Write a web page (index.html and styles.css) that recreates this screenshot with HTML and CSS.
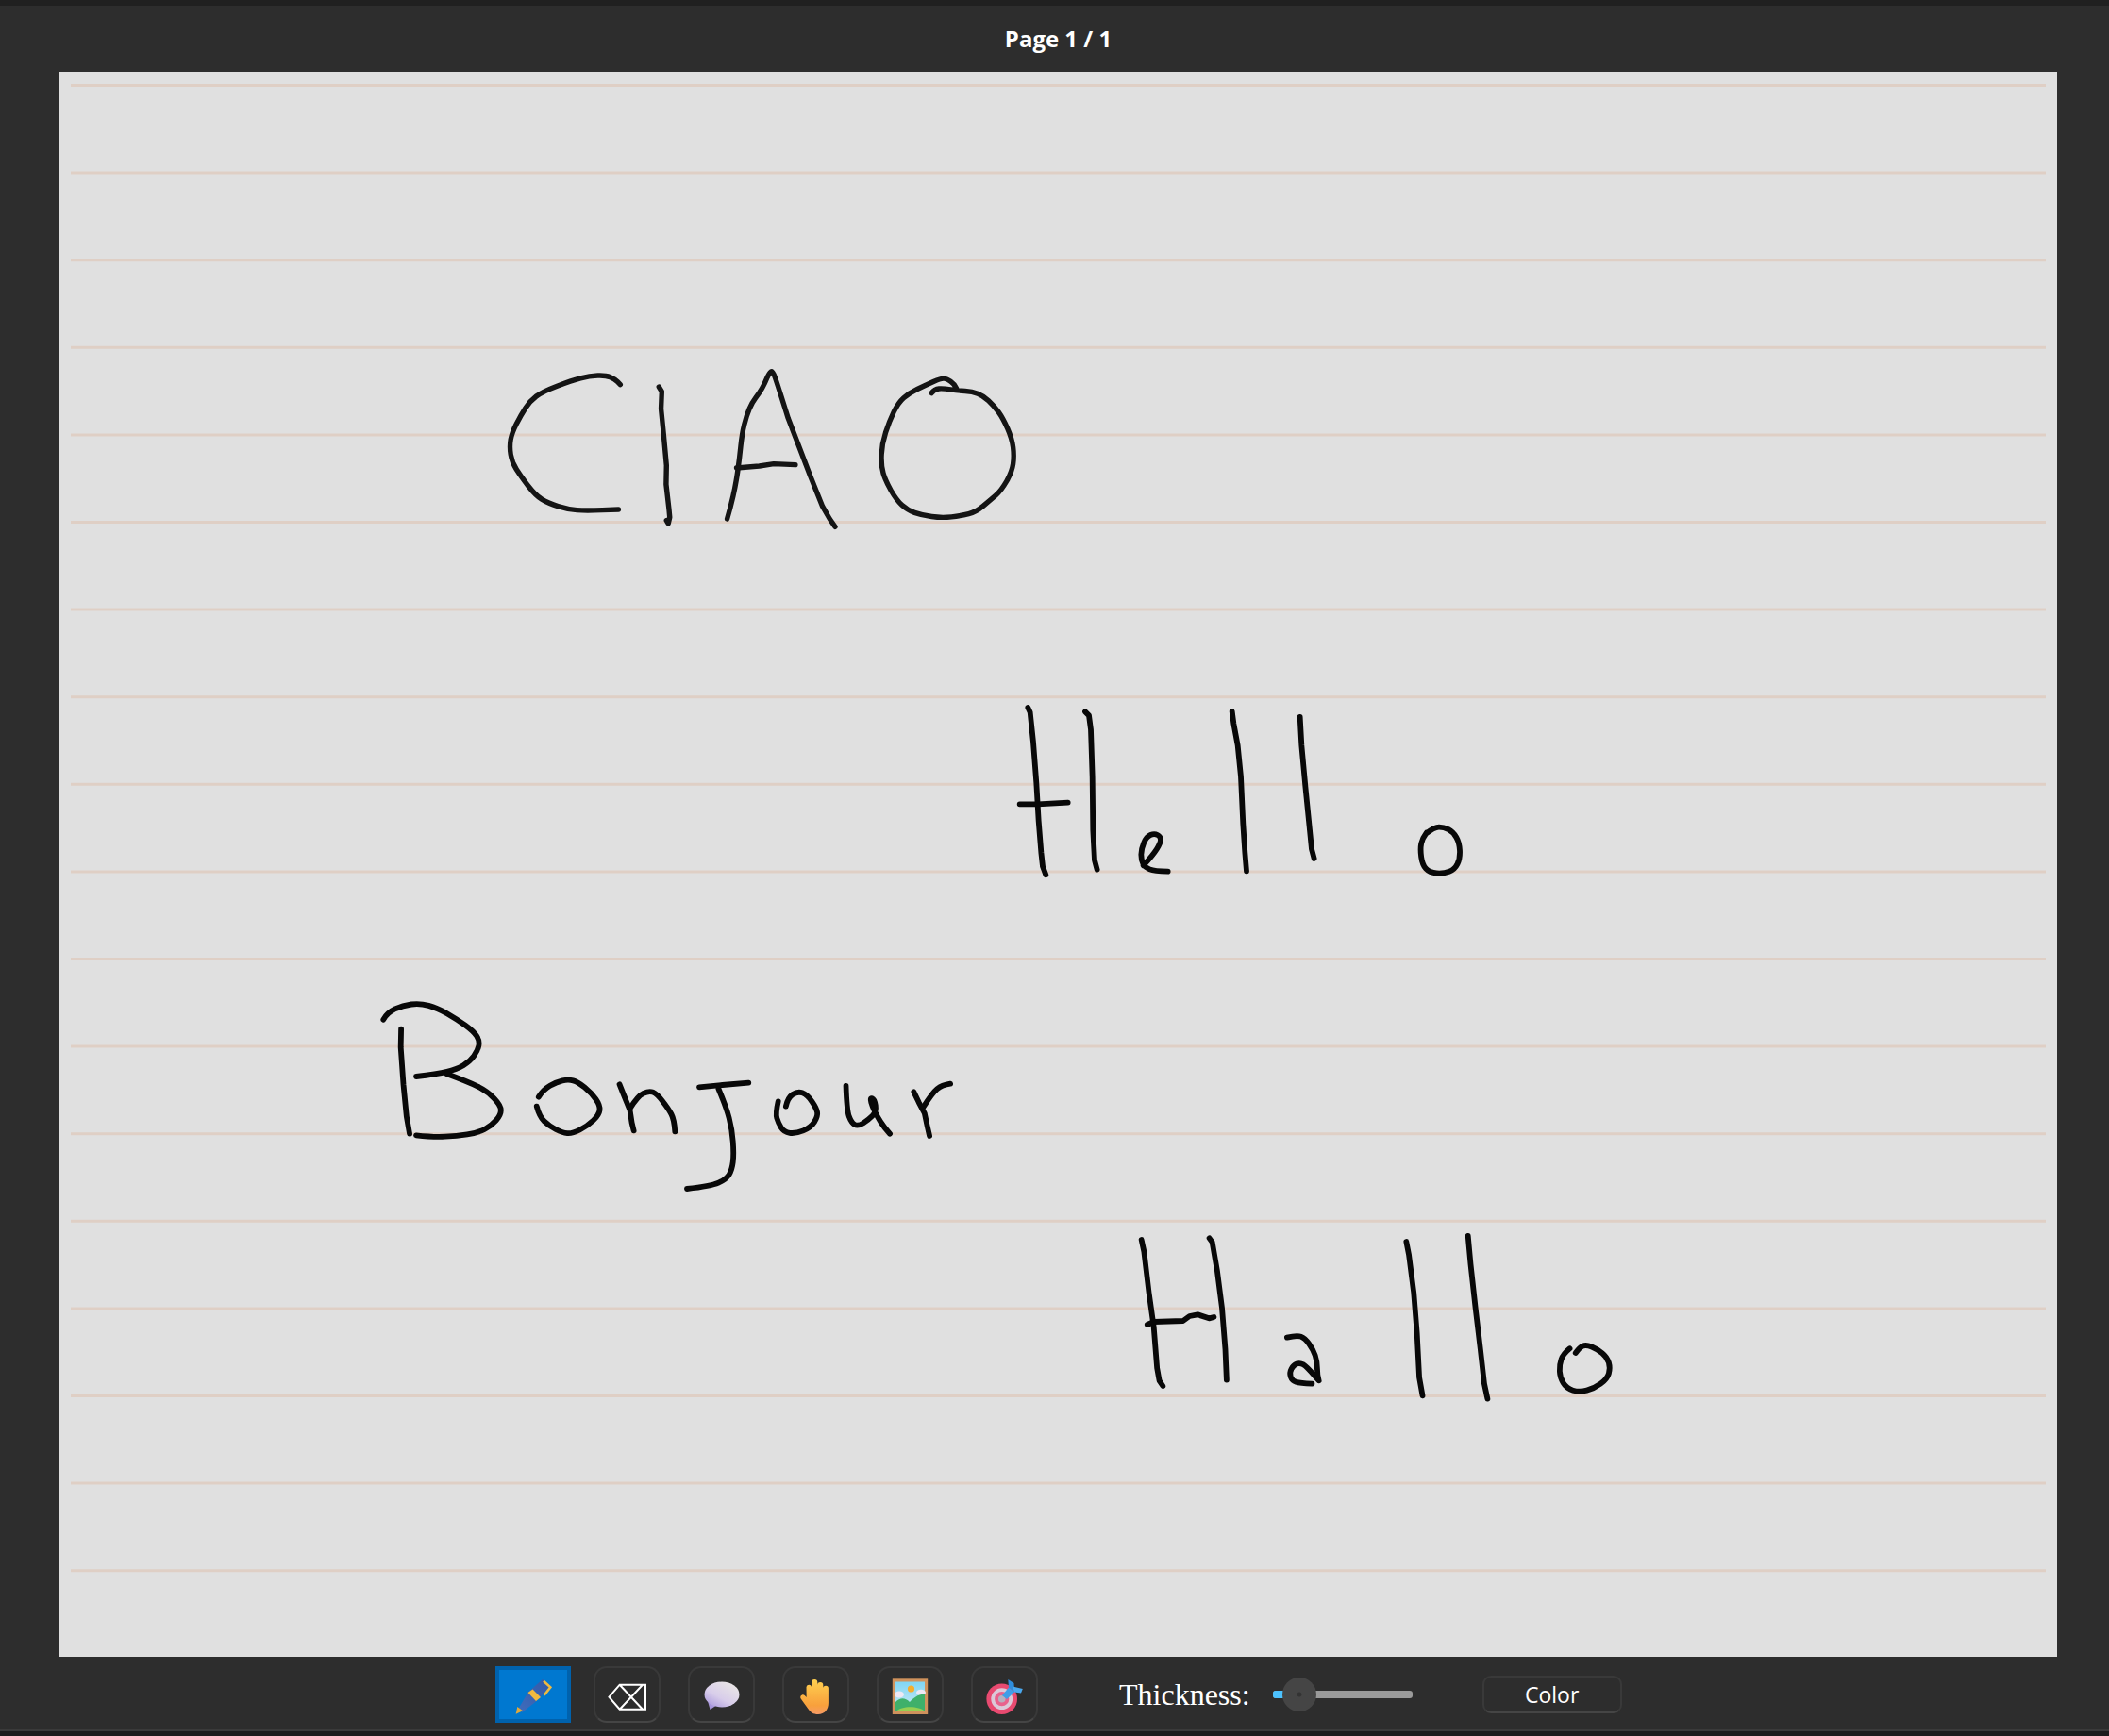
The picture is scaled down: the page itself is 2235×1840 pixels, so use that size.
FILE: index.html
```html
<!DOCTYPE html>
<html lang="en">
<head>
<meta charset="utf-8">
<title>Notebook</title>
<link rel="stylesheet" href="styles.css">
</head>
<body>
<div class="topstrip"></div>
<header class="titlebar"><span class="pagelabel">Page 1 / 1</span></header>
<main class="paper">
<svg class="sheet" viewBox="63 76 2117 1680" xmlns="http://www.w3.org/2000/svg">
<g class="rules">
<line x1="75" x2="2168" y1="90.5" y2="90.5"/><line x1="75" x2="2168" y1="183.1" y2="183.1"/><line x1="75" x2="2168" y1="275.7" y2="275.7"/><line x1="75" x2="2168" y1="368.3" y2="368.3"/><line x1="75" x2="2168" y1="460.9" y2="460.9"/><line x1="75" x2="2168" y1="553.5" y2="553.5"/><line x1="75" x2="2168" y1="646.1" y2="646.1"/><line x1="75" x2="2168" y1="738.7" y2="738.7"/><line x1="75" x2="2168" y1="831.3" y2="831.3"/><line x1="75" x2="2168" y1="923.9" y2="923.9"/><line x1="75" x2="2168" y1="1016.5" y2="1016.5"/><line x1="75" x2="2168" y1="1109.1" y2="1109.1"/><line x1="75" x2="2168" y1="1201.7" y2="1201.7"/><line x1="75" x2="2168" y1="1294.3" y2="1294.3"/><line x1="75" x2="2168" y1="1386.9" y2="1386.9"/><line x1="75" x2="2168" y1="1479.5" y2="1479.5"/><line x1="75" x2="2168" y1="1572.1" y2="1572.1"/><line x1="75" x2="2168" y1="1664.7" y2="1664.7"/>
</g>
<g class="ink thin" transform="translate(510 370) scale(.38265 .33333)">
<path d="M385,113 L377.5,104 Q370,95 357.5,89 Q345,83 322.5,84 Q300,85 275,92.5 Q250,100 210,117.5 Q170,135 152.5,150 Q135,165 122.5,187.5 Q110,210 97.5,237.5 Q85,265 81.5,287.5 Q78,310 81.5,335 Q85,360 97.5,382.5 Q110,405 130,435 Q150,465 167.5,477.5 Q185,490 212.5,500 Q240,510 265,512 Q290,514 335,512 L380,510"/>
<polyline points="492,120 500,135 498,190 505,270 513,370 512,430 520,510 522,535 518,555 513,545"/>
<path d="M681,540 Q690,505 697.5,467.5 Q705,430 710,390 Q715,350 718.500,310 Q722,270 728.500,240 Q735,210 742.500,190 Q750,170 760,155 Q770,140 777.500,125 Q785,110 792,90 Q800,70 804,71 Q808,72 814,91 Q820,110 850,220 L880,310 910,400 945,500 965,540 980,565"/>
<polyline points="707,378 770,372 810,365 870,368"/>
<path d="M1247,140 Q1255,127 1267.5,126 Q1280,125 1300,128.5 Q1320,132 1340,133.5 Q1360,135 1375,141.5 Q1390,148 1405,164 Q1420,180 1432.5,200 Q1445,220 1457.5,252.5 Q1470,285 1473,312.5 Q1476,340 1473,365 Q1470,390 1455,420 Q1440,450 1425,465 Q1410,480 1390,499 Q1370,518 1350,524 Q1330,530 1302.5,533.5 Q1275,537 1247.5,532.5 Q1220,528 1200,520 Q1180,512 1165,496 Q1150,480 1135,450 Q1120,420 1113.5,395 Q1107,370 1108.5,335 Q1110,300 1120,265 Q1130,230 1142.5,200 Q1155,170 1170,155 Q1185,140 1207.5,127.5 Q1230,115 1252.5,103.5 Q1275,92 1282.5,93.5 Q1290,95 1300,102.5 Q1310,110 1316,125"/>
</g>
<g class="ink" transform="translate(1050 730) scale(.33333)">
<polyline points="118,60 125,75 135,170 145,300 152,420 160,520 165,565 175,592"/>
<polyline points="92,367 150,367 245,362"/>
<polyline points="300,73 312,85 318,130 323,280 325,450 330,545 338,575"/>
<path d="M485,562 Q515,530 527.5,510 Q540,490 540,480 Q540,470 530,465 Q520,460 507.5,465 Q495,470 486.5,490 Q478,510 478,527.5 Q478,545 484,556.5 Q490,568 505,574 Q520,580 563,581"/>
<polyline points="767,72 772,110 785,180 795,280 802,430 808,520 813,580"/>
<polyline points="983,90 988,180 1000,310 1015,460 1020,510 1028,540"/>
<path d="M1385,458 Q1372,475 1368.5,492.5 Q1365,510 1368.5,535 Q1372,560 1383.5,572.5 Q1395,585 1417.5,586.5 Q1440,588 1457.5,581.5 Q1475,575 1483.5,557.5 Q1492,540 1491,515 Q1490,490 1480,472.5 Q1470,455 1455,447.5 Q1440,440 1425,440 Q1410,440 1385,460"/>
</g>
<g class="ink" transform="translate(390 1050) scale(.40816 .33333)">
<path d="M40,92 Q50,70 70,58.5 Q90,47 112.5,43.5 Q135,40 157.5,47.5 Q180,55 205,72.5 Q230,90 252.5,110 Q275,130 282.5,145 Q290,160 287.5,175 Q285,190 275,207.5 Q265,225 247.5,237.5 Q230,250 205,257.5 Q180,265 125,273"/>
<path d="M205,265 Q260,290 285,305 Q310,320 327.5,342.5 Q345,365 345,380 Q345,395 332.5,412.5 Q320,430 302.5,441 Q285,452 257.5,457 Q230,462 200,464 Q170,466 125,460"/>
<polyline points="86,122 85,180 92,300 100,400 108,455"/>
<path d="M443,338 Q455,315 472.5,302.5 Q490,290 505,286 Q520,282 532.5,286 Q545,290 562.5,307.5 Q580,325 591.5,345 Q603,365 601.5,380 Q600,395 585,412.5 Q570,430 550,442.5 Q530,455 517.5,453.5 Q505,452 487.5,441 Q470,430 457.5,415 Q445,400 438,368"/>
<polyline points="653,298 665,335 680,380 685,420 690,445"/>
<path d="M680,375 Q700,335 715,326.5 Q730,318 740,323 Q750,328 765,351.5 Q780,375 787.5,392.5 Q795,410 797,448"/>
<polyline points="860,307 920,300 988,293"/>
<path d="M910,312 Q930,370 937.5,405 Q945,440 947.5,480 Q950,520 947.5,545 Q945,570 937.5,585 Q930,600 910,611 Q890,622 828,630"/>
<path d="M1085,368 Q1090,340 1102.5,330 Q1115,320 1127.5,325 Q1140,330 1152.5,352.5 Q1165,375 1166.5,387.5 Q1168,400 1159,417.5 Q1150,435 1130,445 Q1110,455 1095,452.5 Q1080,450 1072.5,435 Q1065,420 1061.5,405 Q1058,390 1065,352"/>
<path d="M1241,303 Q1243,380 1249,400 Q1255,420 1263.5,426 Q1272,432 1286,421 Q1300,410 1310,397.5 Q1320,385 1317.5,365 Q1315,345 1309,342.5 Q1303,340 1306.5,355 Q1310,370 1316,385 Q1322,400 1331,417.5 Q1340,435 1355,455"/>
<polyline points="1417,322 1430,355 1445,390 1452,430 1458,462"/>
<path d="M1442,370 Q1465,325 1477.5,312.5 Q1490,300 1512,296"/>
</g>
<g class="ink" transform="translate(1190 1290) scale(.34439 .33333)">
<polyline points="57,72 65,110 80,240 95,350 105,480 112,520 123,537"/>
<polyline points="75,342 95,333 185,330 205,315 230,310 265,322 280,318"/>
<polyline points="266,67 275,80 290,170 305,290 315,420 319,518"/>
<path d="M505,383 Q535,375 547.5,380 Q560,385 572.5,402.5 Q585,420 591.5,440 Q598,460 598,482.5 Q598,505 603,520 L590,505 Q565,475 555,469 Q545,463 535,466.5 Q525,470 518.5,482.5 Q512,495 516,507.5 Q520,520 532.5,524 Q545,528 582,530"/>
<polyline points="872,78 880,120 895,240 905,370 912,510 922,568"/>
<polyline points="1062,60 1070,150 1085,290 1100,420 1112,530 1122,578"/>
<path d="M1375,418 Q1355,435 1349,452.5 Q1343,470 1344,490 Q1345,510 1355,527.5 Q1365,545 1385,551 Q1405,557 1427.5,551 Q1450,545 1470,530 Q1490,515 1495,497.5 Q1500,480 1495,462.5 Q1490,445 1475,432.5 Q1460,420 1442.5,412.5 Q1425,405 1415,410 Q1405,415 1393,432"/>
</g>
</svg>
</main>
<footer class="toolbar">
<div class="tools">
<button class="tool active" type="button" aria-label="Pen">
<svg class="icon" viewBox="0 0 40 44">
<defs><linearGradient id="penblue" x1="0" y1="1" x2="1" y2="0"><stop offset="0" stop-color="#3f6cbc"/><stop offset="1" stop-color="#3259a8"/></linearGradient></defs>
<polygon points="5,36 15,19.3 30,6 38.3,12.7 23.3,29.3 8.3,41" fill="url(#penblue)"/>
<polygon points="1.7,42.7 3.3,35 9,39.3" fill="#e0a93c"/>
<polygon points="14.5,20 19.5,16.5 28,25 23,29" fill="#f0b93f"/>
<polyline points="31,7.7 38.3,14.3 31.7,22.7" class="penclip"/>
</svg>
</button>
<button class="tool" type="button" aria-label="Eraser">
<svg class="icon" viewBox="0 0 40 44">
<path class="eraser" d="M.5 24.700 L11.700 11.700 H39 V37.700 H11.700 Z M11.700 11.700 L36 37.700 M11.700 37.700 L36 11.700"/>
</svg>
</button>
<button class="tool" type="button" aria-label="Comment">
<svg class="icon" viewBox="0 0 40 44">
<defs><linearGradient id="bubble" x1=".8" y1=".1" x2=".1" y2="1"><stop offset="0" stop-color="#e8e4e6"/><stop offset=".55" stop-color="#d8cdea"/><stop offset="1" stop-color="#a896dc"/></linearGradient></defs>
<polygon points="5,29 7.500,38 15,33" fill="#a896dc"/>
<ellipse cx="20" cy="22" rx="18.500" ry="13.500" fill="url(#bubble)"/>
</svg>
</button>
<button class="tool" type="button" aria-label="Hand">
<svg class="icon" viewBox="0 0 40 44">
<defs><linearGradient id="hand" x1="0" y1="0" x2="0" y2="1"><stop offset="0" stop-color="#ffd050"/><stop offset=".75" stop-color="#f8a03c"/><stop offset="1" stop-color="#f59a66"/></linearGradient></defs>
<path fill="url(#hand)" d="M9.500 14a2.900 2.900 0 0 1 5.600 0V9a3 3 0 0 1 6.200 0v3a3 3 0 0 1 6 0v3.500a2.800 2.800 0 0 1 5.600 0V31c0 7-4 12-11 12-5 0-8-2-11-6.500L3.700 26.500c-1.700-2.500 1.800-5.500 4-3.500l2 2Z"/>
</svg>
</button>
<button class="tool" type="button" aria-label="Picture">
<svg class="icon" viewBox="0 0 40 44">
<defs><linearGradient id="sky" x1="0" y1="0" x2="0" y2="1"><stop offset="0" stop-color="#7fd6f4"/><stop offset="1" stop-color="#cfeaf4"/></linearGradient></defs>
<rect x=".8" y="5.300" width="37.400" height="37.700" fill="#cf925c"/>
<rect x="4" y="8.500" width="31" height="31.300" fill="url(#sky)"/>
<circle cx="20.500" cy="16" r="3.600" fill="#f5ae2e"/>
<ellipse cx="8" cy="22" rx="5" ry="3.500" fill="#eee8f4"/>
<ellipse cx="31" cy="20" rx="5" ry="3.200" fill="#eee8f4"/>
<path fill="#3fb06a" d="M4 30c5-5 10-5 15 0 4-4 10-9 16-8v18H4Z"/>
<path fill="#96cf52" d="M5 39.800c5-6 24-6 30 0Z"/>
</svg>
</button>
<button class="tool" type="button" aria-label="Target">
<svg class="icon" viewBox="0 0 40 44">
<circle cx="16.700" cy="26.700" r="16.300" fill="#e84a70"/>
<circle cx="16.700" cy="26.700" r="11.400" fill="#dcc9d8"/>
<circle cx="16.700" cy="26.700" r="7.600" fill="#e9628c"/>
<circle cx="16.700" cy="26.700" r="3.800" fill="#b8b0c0"/>
<polygon points="17,23 24,14.500 30,19.500 22,27" fill="#3f9ee8"/>
<polygon points="24,14.500 23.300,6 29.500,10 30,19.500" fill="#2f8edd"/>
<polygon points="28,13.500 38.800,16 37,20.500 30,19.500" fill="#4aa8ee"/>
</svg>
</button>
</div>
<span class="thickness-label">Thickness:</span>
<div class="slider">
<div class="track"><div class="fill"></div></div>
<div class="thumb"></div>
</div>
<button class="colorbtn" type="button">Color</button>
</footer>
<div class="footerline"></div>
</body>
</html>
```
FILE: styles.css
```css
* { box-sizing: border-box; }
html, body { margin: 0; padding: 0; }
body {
  height: 1840px;
  overflow: hidden;
  display: flex;
  flex-direction: column;
  background: #2d2d2d;
  color: #fff;
}
.topstrip { height: 6px; background: #202020; flex: none; }
.titlebar {
  height: 70px;
  flex: none;
  display: flex;
  align-items: center;
  justify-content: center;
  padding-left: 8px;
}
.pagelabel {
  font: 700 24px/1 "Open Sans", "Noto Sans", sans-serif;
}
.paper {
  height: 1680px;
  flex: none;
  margin: 0 55px 0 63px;
  background: #e0e0e0;
}
.sheet { display: block; width: 100%; height: 100%; }
.rules line { stroke: #dfcfc5; stroke-width: 3; }
.ink > * {
  fill: none;
  stroke: #080808;
  stroke-width: 5.8px;
  stroke-linecap: round;
  stroke-linejoin: round;
  vector-effect: non-scaling-stroke;
}
.ink.thin > * { stroke: #141414; stroke-width: 5.4px; }

.toolbar {
  height: 77px;
  flex: none;
  display: flex;
  align-items: center;
  padding: 3px 0 0 525px;
}
.tools { display: flex; gap: 29px; align-items: center; }
.tool {
  width: 71px;
  height: 60px;
  padding: 0;
  display: flex;
  align-items: center;
  justify-content: center;
  background: #2d2d2d;
  border: 2px solid #393939;
  border-bottom-color: #454545;
  border-radius: 14px;
}
.tool.active {
  width: 80px;
  margin-right: -5px;
  background: #0078d0;
  border: 4px solid #0062ad;
  border-radius: 0;
}
.icon { width: 40px; height: 44px; flex: none; overflow: visible; }
.penclip { fill: none; stroke: #f0b93f; stroke-width: 2.6; }
.eraser { fill: none; stroke: #fff; stroke-width: 2; }
.thickness-label {
  margin-left: 86px;
  font: 32px/1 "Liberation Serif", serif;
}
.slider {
  position: relative;
  width: 148px;
  height: 36px;
  margin-left: 24px;
  display: flex;
  align-items: center;
}
.track {
  width: 100%;
  height: 8px;
  border-radius: 3px;
  background: #9a9a9a;
  overflow: hidden;
}
.fill { width: 14px; height: 100%; background: #4cc2ff; }
.thumb {
  position: absolute;
  left: 10px;
  top: 0;
  width: 36px;
  height: 36px;
  border-radius: 50%;
  background: radial-gradient(circle, #333 0 2px, #454545 3px);
}
.colorbtn {
  width: 148px;
  height: 40px;
  margin-left: 74px;
  padding: 0;
  background: #2d2d2d;
  color: #fff;
  border: 2px solid #393939;
  border-bottom-color: #454545;
  border-radius: 9px;
  font: 23px/1 "Open Sans", "Noto Sans", sans-serif;
}
.footerline {
  height: 7px;
  flex: none;
  background: #1c1c1c;
  border-top: 2px solid #3a3a3a;
}
```
